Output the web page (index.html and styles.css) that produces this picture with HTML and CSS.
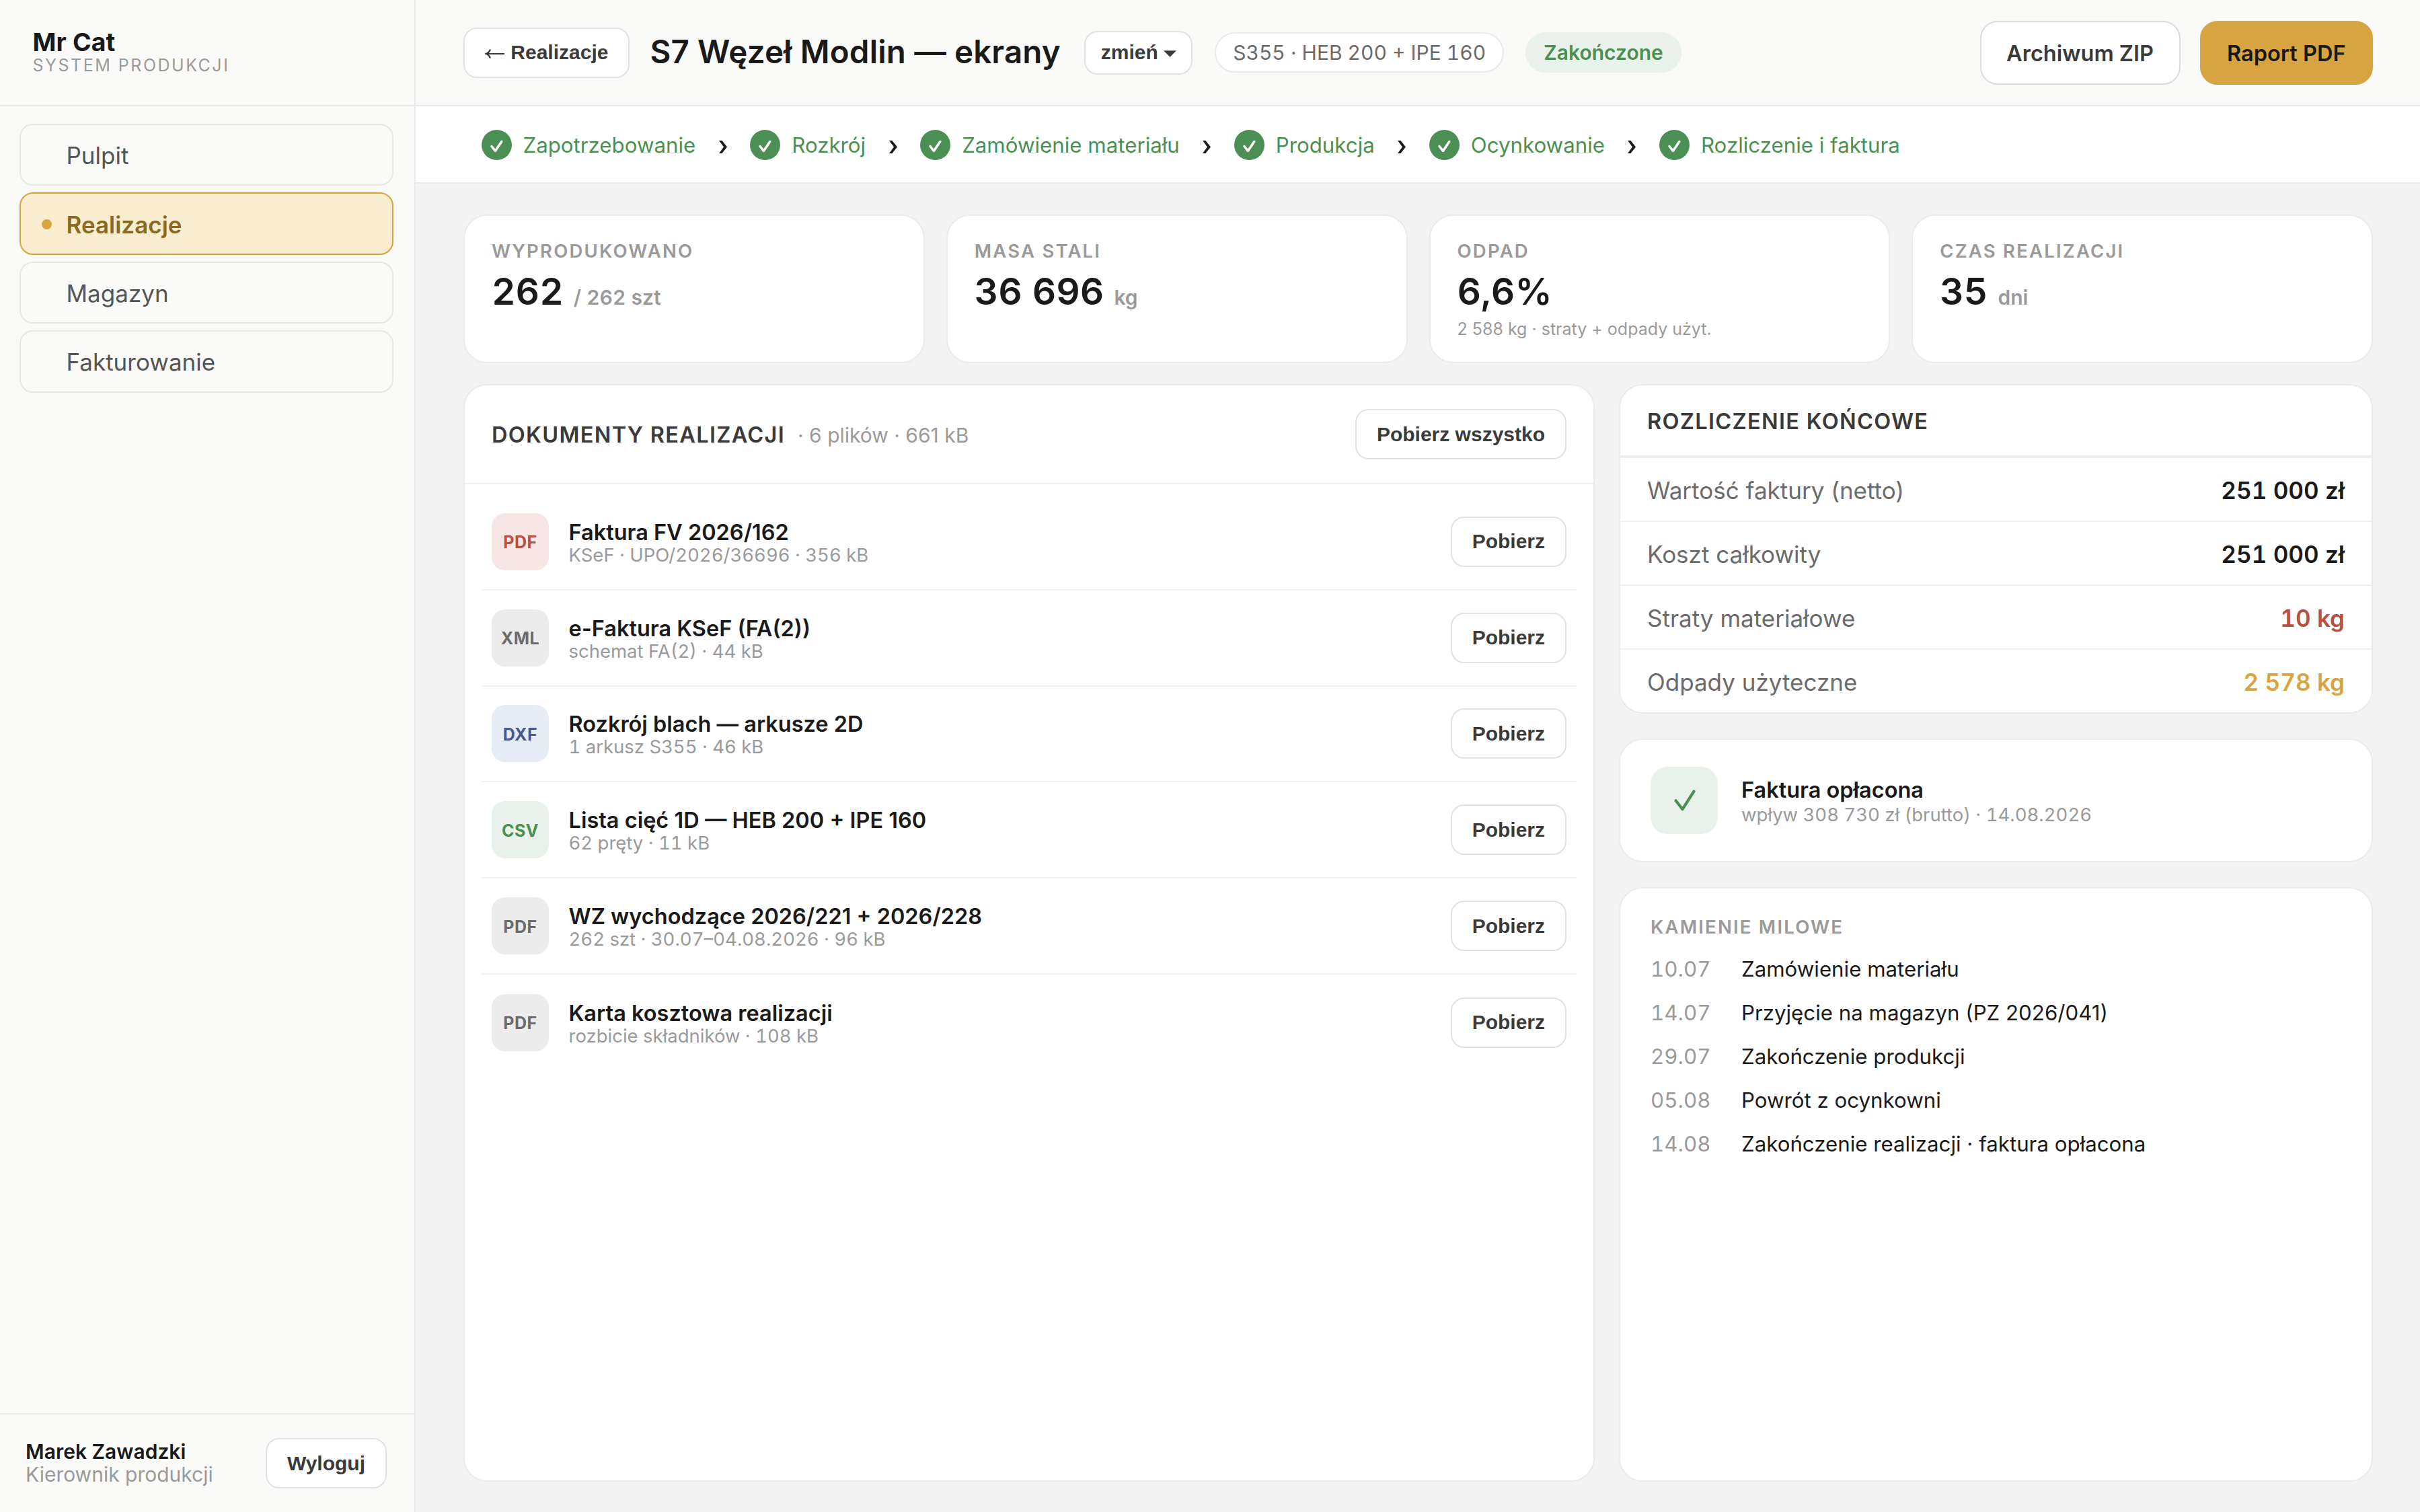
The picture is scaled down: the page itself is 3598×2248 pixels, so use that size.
FILE: index.html
```html
<!DOCTYPE html>
<html lang="pl">
<head>
    <meta charset="UTF-8">
    <title>S7 Węzeł Modlin — ekrany</title>
    <link rel="stylesheet" href="styles.css">
</head>
<body>
    <aside class="sidebar">
        <div class="brand">
            <div class="brand-name">Mr Cat</div>
            <div class="brand-sub">SYSTEM PRODUKCJI</div>
        </div>
        <nav class="nav">
            <a class="nav-item"><span class="dot"></span>Pulpit</a>
            <a class="nav-item active"><span class="dot"></span>Realizacje</a>
            <a class="nav-item"><span class="dot"></span>Magazyn</a>
            <a class="nav-item"><span class="dot"></span>Fakturowanie</a>
        </nav>
        <div class="user">
            <div>
                <div class="user-name">Marek Zawadzki</div>
                <div class="user-role">Kierownik produkcji</div>
            </div>
            <button class="btn">Wyloguj</button>
        </div>
    </aside>

    <main class="main">
        <header class="topbar">
            <button class="btn"><svg class="arrow" viewBox="0 0 30 16"><path d="M1.5 8H29M8 1.5Q6 6.5 1.5 8Q6 9.5 8 14.5"/></svg> Realizacje</button>
            <h1>S7 Węzeł Modlin — ekrany</h1>
            <button class="btn btn-change">zmień <svg class="caret" viewBox="0 0 20 10"><path d="M0 0h20L10 10z"/></svg></button>
            <span class="chip">S355 · HEB 200 + IPE 160</span>
            <span class="chip chip-done">Zakończone</span>
            <div class="actions">
                <button class="btn-lg">Archiwum ZIP</button>
                <button class="btn-lg primary">Raport PDF</button>
            </div>
        </header>

        <div class="steps">
            <div class="step"><svg class="tick" viewBox="0 0 45 45"><circle cx="22.5" cy="22.5" r="22.5"/><path d="M15 24.5l5.4 6.9L29.8 17.5"/></svg>Zapotrzebowanie</div>
            <svg class="sep" viewBox="0 0 12 19"><path d="M0 0h4.4L12 9.5 4.4 19H0l7-9.5z"/></svg>
            <div class="step"><svg class="tick" viewBox="0 0 45 45"><circle cx="22.5" cy="22.5" r="22.5"/><path d="M15 24.5l5.4 6.9L29.8 17.5"/></svg>Rozkrój</div>
            <svg class="sep" viewBox="0 0 12 19"><path d="M0 0h4.4L12 9.5 4.4 19H0l7-9.5z"/></svg>
            <div class="step"><svg class="tick" viewBox="0 0 45 45"><circle cx="22.5" cy="22.5" r="22.5"/><path d="M15 24.5l5.4 6.9L29.8 17.5"/></svg>Zamówienie materiału</div>
            <svg class="sep" viewBox="0 0 12 19"><path d="M0 0h4.4L12 9.5 4.4 19H0l7-9.5z"/></svg>
            <div class="step"><svg class="tick" viewBox="0 0 45 45"><circle cx="22.5" cy="22.5" r="22.5"/><path d="M15 24.5l5.4 6.9L29.8 17.5"/></svg>Produkcja</div>
            <svg class="sep" viewBox="0 0 12 19"><path d="M0 0h4.4L12 9.5 4.4 19H0l7-9.5z"/></svg>
            <div class="step"><svg class="tick" viewBox="0 0 45 45"><circle cx="22.5" cy="22.5" r="22.5"/><path d="M15 24.5l5.4 6.9L29.8 17.5"/></svg>Ocynkowanie</div>
            <svg class="sep" viewBox="0 0 12 19"><path d="M0 0h4.4L12 9.5 4.4 19H0l7-9.5z"/></svg>
            <div class="step"><svg class="tick" viewBox="0 0 45 45"><circle cx="22.5" cy="22.5" r="22.5"/><path d="M15 24.5l5.4 6.9L29.8 17.5"/></svg>Rozliczenie i faktura</div>
        </div>

        <div class="content">
            <section class="stats">
                <div class="card stat">
                    <div class="label">WYPRODUKOWANO</div>
                    <div class="value">262<span class="unit">/ 262 szt</span></div>
                </div>
                <div class="card stat">
                    <div class="label">MASA STALI</div>
                    <div class="value">36 696<span class="unit">kg</span></div>
                </div>
                <div class="card stat">
                    <div class="label">ODPAD</div>
                    <div class="value">6,6%</div>
                    <div class="note">2 588 kg · straty + odpady użyt.</div>
                </div>
                <div class="card stat">
                    <div class="label">CZAS REALIZACJI</div>
                    <div class="value">35<span class="unit">dni</span></div>
                </div>
            </section>

            <div class="columns">
                <section class="card docs">
                    <div class="docs-head">
                        <h2>DOKUMENTY REALIZACJI</h2>
                        <span class="count">· 6 plików · 661 kB</span>
                        <button class="btn">Pobierz wszystko</button>
                    </div>
                    <div class="docs-list">
                        <div class="doc">
                            <div class="badge red">PDF</div>
                            <div class="doc-info">
                                <div class="doc-title">Faktura FV 2026/162</div>
                                <div class="doc-meta">KSeF · UPO/2026/36696 · 356 kB</div>
                            </div>
                            <button class="btn">Pobierz</button>
                        </div>
                        <div class="doc">
                            <div class="badge">XML</div>
                            <div class="doc-info">
                                <div class="doc-title">e-Faktura KSeF (FA(2))</div>
                                <div class="doc-meta">schemat FA(2) · 44 kB</div>
                            </div>
                            <button class="btn">Pobierz</button>
                        </div>
                        <div class="doc">
                            <div class="badge blue">DXF</div>
                            <div class="doc-info">
                                <div class="doc-title">Rozkrój blach — arkusze 2D</div>
                                <div class="doc-meta">1 arkusz S355 · 46 kB</div>
                            </div>
                            <button class="btn">Pobierz</button>
                        </div>
                        <div class="doc">
                            <div class="badge green">CSV</div>
                            <div class="doc-info">
                                <div class="doc-title">Lista cięć 1D — HEB 200 + IPE 160</div>
                                <div class="doc-meta">62 pręty · 11 kB</div>
                            </div>
                            <button class="btn">Pobierz</button>
                        </div>
                        <div class="doc">
                            <div class="badge">PDF</div>
                            <div class="doc-info">
                                <div class="doc-title">WZ wychodzące 2026/221 + 2026/228</div>
                                <div class="doc-meta">262 szt · 30.07–04.08.2026 · 96 kB</div>
                            </div>
                            <button class="btn">Pobierz</button>
                        </div>
                        <div class="doc">
                            <div class="badge">PDF</div>
                            <div class="doc-info">
                                <div class="doc-title">Karta kosztowa realizacji</div>
                                <div class="doc-meta">rozbicie składników · 108 kB</div>
                            </div>
                            <button class="btn">Pobierz</button>
                        </div>
                    </div>
                </section>

                <div class="side">
                    <section class="card">
                        <h2 class="sum-head">ROZLICZENIE KOŃCOWE</h2>
                        <div class="sum-row"><span>Wartość faktury (netto)</span><b>251 000 zł</b></div>
                        <div class="sum-row"><span>Koszt całkowity</span><b>251 000 zł</b></div>
                        <div class="sum-row"><span>Straty materiałowe</span><b class="loss">10 kg</b></div>
                        <div class="sum-row"><span>Odpady użyteczne</span><b class="useful">2 578 kg</b></div>
                    </section>
                    <section class="card paid">
                        <div class="paid-icon">
                            <svg viewBox="0 0 100 100"><path d="M37.5 50.3l10 12.9 17-26.7"/></svg>
                        </div>
                        <div>
                            <div class="paid-title">Faktura opłacona</div>
                            <div class="paid-meta">wpływ 308 730 zł (brutto) · 14.08.2026</div>
                        </div>
                    </section>
                    <section class="card milestones">
                        <div class="label">KAMIENIE MILOWE</div>
                        <ul>
                            <li><time>10.07</time>Zamówienie materiału</li>
                            <li><time>14.07</time>Przyjęcie na magazyn (PZ 2026/041)</li>
                            <li><time>29.07</time>Zakończenie produkcji</li>
                            <li><time>05.08</time>Powrót z ocynkowni</li>
                            <li><time>14.08</time>Zakończenie realizacji · faktura opłacona</li>
                        </ul>
                    </section>
                </div>
            </div>
        </div>
    </main>
</body>
</html>
```
FILE: styles.css
```css
* {
    box-sizing: border-box;
}

body {
    margin: 0;
    height: 100vh;
    display: flex;
    overflow: hidden;
    font-family: Inter, sans-serif;
    font-size: 31.25px;
    color: #1a1a1a;
    background: #f3f3f3;
}

h1, h2, ul {
    margin: 0;
    padding: 0;
}

/* Sidebar */
.sidebar {
    width: 618px;
    flex: none;
    display: flex;
    flex-direction: column;
    background: #fafaf8;
    border-right: 2px solid #eaeaea;
}

.brand {
    height: 158px;
    padding: 44px 0 0 48.5px;
    border-bottom: 2px solid #eaeaea;
}

.brand-name {
    font-size: 37.5px;
    font-weight: 700;
    line-height: 38px;
    letter-spacing: 0.1px;
}

.brand-sub {
    font-size: 25px;
    line-height: 31px;
    letter-spacing: 2.5px;
    color: #9a9a9a;
}

.nav {
    flex: 1;
    padding: 26px 31px 0 28.5px;
    display: flex;
    flex-direction: column;
    gap: 10px;
}

.nav-item {
    height: 92.4px;
    padding: 2px 0 0 31px;
    display: flex;
    align-items: center;
    gap: 22px;
    border: 2px solid #e9e9e3;
    border-radius: 20px;
    font-size: 35px;
    color: #555;
}

.dot {
    width: 15px;
    height: 15px;
    border-radius: 50%;
}

.nav-item.active {
    background: #f9edcf;
    border-color: #d7a441;
    color: #8a6a22;
    font-weight: 600;
}

.nav-item.active .dot {
    background: #d7a441;
}

.user {
    height: 147px;
    padding: 0 41px 0 38px;
    display: flex;
    align-items: center;
    justify-content: space-between;
    border-top: 2px solid #eaeaea;
    font-size: 30px;
}

.user-name {
    font-weight: 600;
    line-height: 34px;
}

.user-role {
    line-height: 35px;
    color: #9a9a9a;
}

/* Buttons */
.btn {
    height: 75px;
    padding: 0 30px;
    flex: none;
    font-family: "Liberation Sans", Arial, sans-serif;
    font-size: 30px;
    font-weight: 600;
    color: #3a3a3a;
    background: #fff;
    border: 2px solid #e2e2e2;
    border-radius: 20px;
}

.btn-change {
    height: 65px;
    padding: 0 22px 0 23px;
    margin: 0 1px 0 3px;
}

.arrow {
    width: 30px;
    height: 16px;
    vertical-align: 0;
    fill: none;
    stroke: #3a3a3a;
    stroke-width: 2.2;
}

.caret {
    width: 19px;
    height: 10px;
    vertical-align: 3px;
    fill: #3a3a3a;
}

.btn-lg {
    height: 95px;
    padding: 2px 37.5px 0;
    font-family: inherit;
    font-size: 32.5px;
    font-weight: 600;
    color: #3a3a3a;
    background: #fff;
    border: 2px solid #dcdcdc;
    border-radius: 26px;
}

.btn-lg.primary {
    color: #1a1a1a;
    background: #d7a441;
    border-color: #d7a441;
    padding: 2px 38.5px 0;
}

/* Top bar */
.main {
    flex: 1;
    min-width: 0;
    display: flex;
    flex-direction: column;
}

.topbar {
    height: 158px;
    flex: none;
    padding: 0 70px 0 71px;
    display: flex;
    align-items: center;
    gap: 32px;
    background: #fafaf8;
    border-bottom: 2px solid #eaeaea;
}

.topbar h1 {
    font-size: 47.5px;
    font-weight: 600;
    letter-spacing: 0.15px;
    line-height: 54px;
    padding-bottom: 3px;
    margin-left: -2px;
    white-space: nowrap;
}

.chip {
    height: 60px;
    padding: 0 25px;
    display: flex;
    align-items: center;
    font-size: 30px;
    font-variant-numeric: tabular-nums;
    white-space: nowrap;
    color: #6b6b6b;
    background: #fff;
    border: 2px solid #eaeaea;
    border-radius: 30px;
}

.chip-done {
    font-weight: 600;
    color: #4c8f54;
    background: #e8f2ea;
    border-color: #e8f2ea;
}

.actions {
    margin-left: auto;
    display: flex;
    gap: 29px;
}

/* Steps */
.steps {
    height: 115px;
    flex: none;
    padding: 2px 0 0 97.5px;
    display: flex;
    align-items: center;
    background: #fff;
    border-bottom: 2px solid #eaeaea;
}

.step {
    display: flex;
    align-items: center;
    gap: 17px;
    color: #4c8f54;
}

.tick {
    width: 45px;
    height: 45px;
    fill: #4c8f54;
}

.tick path {
    fill: none;
    stroke: #fff;
    stroke-width: 3.5;
    stroke-linecap: round;
    stroke-linejoin: round;
}

.sep {
    width: 12px;
    height: 19px;
    margin: 5px 34.5px 0 34.5px;
    fill: #1a1a1a;
}

/* Content */
.content {
    flex: 1;
    min-height: 0;
    padding: 46px 70px 45px 71px;
    display: flex;
    flex-direction: column;
    gap: 31px;
}

.card {
    background: #fff;
    border: 2px solid #ebebeb;
    border-radius: 35px;
}

.stats {
    display: grid;
    grid-template-columns: repeat(4, 1fr);
    gap: 32px;
}

.stat {
    height: 221px;
    padding: 36px 40px;
}

.label {
    font-size: 27.5px;
    line-height: 33px;
    font-weight: 600;
    letter-spacing: 0.08em;
    color: #9a9a9a;
}

.value {
    margin-top: 10px;
    font-size: 55px;
    line-height: 67px;
    font-weight: 600;
    font-variant-numeric: tabular-nums;
}

.unit {
    margin-left: 15px;
    font-size: 30px;
    color: #9a9a9a;
}

.note {
    margin-top: 7px;
    font-size: 25px;
    line-height: 30px;
    color: #9a9a9a;
}

.columns {
    flex: 1;
    min-height: 0;
    display: grid;
    grid-template-columns: 1682px 1fr;
    gap: 36px;
}

h2 {
    font-size: 32.5px;
    font-weight: 600;
    letter-spacing: 0.04em;
    color: #3a3a3a;
}

/* Documents */
.docs-head {
    height: 147px;
    padding: 0 40px;
    display: flex;
    align-items: center;
    border-bottom: 2px solid #eeeeee;
}

.docs-head h2,
.count {
    padding-top: 2px;
}

.count {
    margin-left: 19px;
    font-size: 30px;
    color: #9a9a9a;
}

.docs-head .btn {
    margin-left: auto;
}

.docs-list {
    padding: 15px 25px;
}

.doc {
    height: 142.8px;
    padding: 0 15px;
    display: flex;
    align-items: center;
    border-bottom: 2px solid #f3f3f3;
}

.doc:last-child {
    border-bottom: none;
}

.badge {
    width: 85px;
    height: 85px;
    display: flex;
    align-items: center;
    justify-content: center;
    border-radius: 20px;
    padding-top: 2px;
    font-size: 25px;
    font-weight: 700;
    letter-spacing: 0.5px;
    color: #6b6b6b;
    background: #ececec;
}

.badge.red {
    color: #b94f41;
    background: #f6e6e4;
}

.badge.blue {
    color: #435a8e;
    background: #e7edf6;
}

.badge.green {
    color: #4c8f54;
    background: #e8f2ea;
}

.doc-info {
    flex: 1;
    margin-left: 29.5px;
    padding-top: 1px;
}

.doc-title {
    font-size: 32.5px;
    line-height: 39px;
    font-weight: 600;
}

.doc-meta {
    font-size: 27.5px;
    line-height: 29px;
    font-variant-numeric: tabular-nums;
    color: #9a9a9a;
}

/* Right column */
.side {
    min-height: 0;
    display: flex;
    flex-direction: column;
    gap: 37px;
}

.sum-head {
    height: 106px;
    padding: 0 40px;
    line-height: 107px;
    border-bottom: 2px solid #eeeeee;
}

.sum-row {
    height: 95px;
    padding: 2px 40px 0;
    display: flex;
    align-items: center;
    justify-content: space-between;
    border-top: 2px solid #f0f0f0;
    font-size: 35px;
    color: #6b6b6b;
}

.sum-row b {
    font-weight: 600;
    font-variant-numeric: tabular-nums;
    color: #1a1a1a;
}

.sum-row .loss {
    color: #b94f41;
}

.sum-row .useful {
    color: #d7a441;
}

.paid {
    height: 184px;
    padding: 0 45px;
    display: flex;
    align-items: center;
    gap: 35px;
}

.paid-icon {
    width: 100px;
    height: 100px;
    border-radius: 25px;
    background: #e8f2ea;
}

.paid-icon path {
    fill: none;
    stroke: #4c8f54;
    stroke-width: 4.2;
    stroke-linecap: round;
    stroke-linejoin: round;
}

.paid-title {
    margin-top: 2px;
    font-size: 32.5px;
    line-height: 39px;
    font-weight: 600;
}

.paid-meta {
    font-size: 27.5px;
    line-height: 34px;
    font-variant-numeric: tabular-nums;
    color: #9a9a9a;
}

.milestones {
    flex: 1;
    padding: 41px 45px;
}

.milestones ul {
    margin-top: 14px;
    list-style: none;
}

.milestones li {
    display: flex;
    line-height: 65px;
}

.milestones time {
    width: 135px;
    font-variant-numeric: tabular-nums;
    color: #9a9a9a;
}
```
